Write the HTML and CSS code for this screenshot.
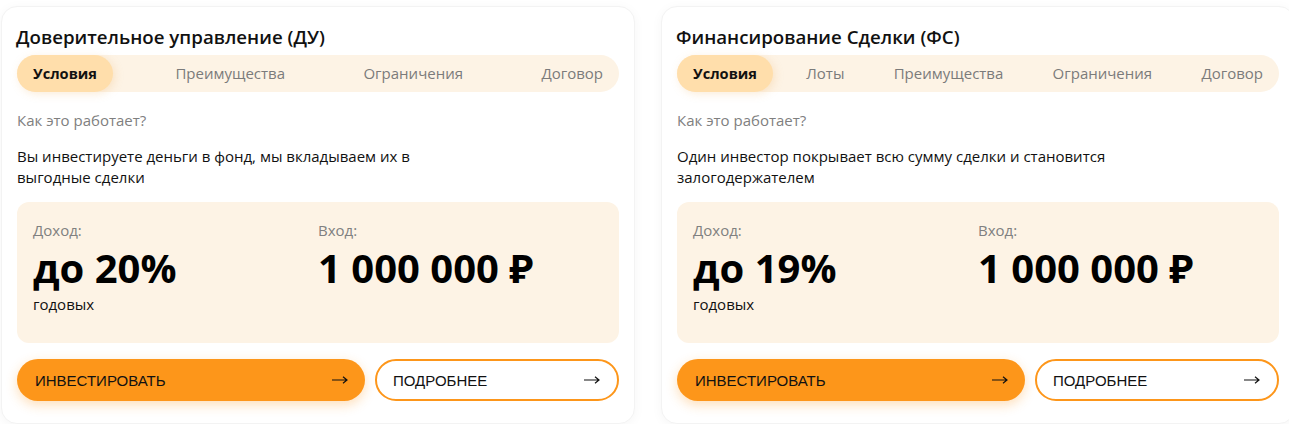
FILE: index.html
```html
<!DOCTYPE html>
<html lang="ru">
<head>
<meta charset="utf-8">
<title>Продукты</title>
<link rel="stylesheet" href="styles.css">
</head>
<body>
<div class="row">
  <section class="card">
    <h2 class="title">Доверительное управление (ДУ)</h2>
    <nav class="tabs">
      <span class="tab active">Условия</span>
      <span class="tab">Преимущества</span>
      <span class="tab">Ограничения</span>
      <span class="tab">Договор</span>
    </nav>
    <p class="hint">Как это работает?</p>
    <p class="desc">Вы инвестируете деньги в фонд, мы вкладываем их в выгодные сделки</p>
    <div class="info">
      <div class="col">
        <div class="label">Доход:</div>
        <div class="big">до 20%</div>
        <div class="sub">годовых</div>
      </div>
      <div class="col">
        <div class="label">Вход:</div>
        <div class="big">1 000 000 ₽</div>
      </div>
    </div>
    <div class="actions">
      <a class="btn primary">ИНВЕСТИРОВАТЬ<svg class="arrow" viewBox="0 0 16 10" width="16" height="10"><path d="M0 5H15M11 1.8L15 5L11 8.2" fill="none" stroke="#111" stroke-width="1.2"/></svg></a>
      <a class="btn outline">ПОДРОБНЕЕ<svg class="arrow" viewBox="0 0 16 10" width="16" height="10"><path d="M0 5H15M11 1.8L15 5L11 8.2" fill="none" stroke="#111" stroke-width="1.2"/></svg></a>
    </div>
  </section>
  <section class="card">
    <h2 class="title">Финансирование Сделки (ФС)</h2>
    <nav class="tabs">
      <span class="tab active">Условия</span>
      <span class="tab">Лоты</span>
      <span class="tab">Преимущества</span>
      <span class="tab">Ограничения</span>
      <span class="tab">Договор</span>
    </nav>
    <p class="hint">Как это работает?</p>
    <p class="desc">Один инвестор покрывает всю сумму сделки и становится залогодержателем</p>
    <div class="info">
      <div class="col">
        <div class="label">Доход:</div>
        <div class="big">до 19%</div>
        <div class="sub">годовых</div>
      </div>
      <div class="col">
        <div class="label">Вход:</div>
        <div class="big">1 000 000 ₽</div>
      </div>
    </div>
    <div class="actions">
      <a class="btn primary">ИНВЕСТИРОВАТЬ<svg class="arrow" viewBox="0 0 16 10" width="16" height="10"><path d="M0 5H15M11 1.8L15 5L11 8.2" fill="none" stroke="#111" stroke-width="1.2"/></svg></a>
      <a class="btn outline">ПОДРОБНЕЕ<svg class="arrow" viewBox="0 0 16 10" width="16" height="10"><path d="M0 5H15M11 1.8L15 5L11 8.2" fill="none" stroke="#111" stroke-width="1.2"/></svg></a>
    </div>
  </section>
</div>
</body>
</html>
```
FILE: styles.css
```css
* { box-sizing: border-box; }
html, body { margin: 0; padding: 0; background: #ffffff; overflow: hidden; }
body {
  font-family: "Open Sans", "Noto Sans", sans-serif;
  color: #111;
  width: 1289px;
  height: 426px;
}
.row {
  display: flex;
  gap: 26px;
  padding: 6px 0 0 1px;
  width: 1289px;
  overflow: hidden;
}
.card {
  flex: 0 0 634px;
  background: #fff;
  border-radius: 16px;
  border: 1px solid #f3f3f3;
  box-shadow: 0 2px 12px rgba(0,0,0,0.04);
  padding: 18px 15px 22px 15px;
}
.title {
  margin: 0 0 6px -1px;
  font-size: 18.7px;
  line-height: 24px;
  font-weight: 600;
  color: #111;
}
.tabs {
  display: flex;
  justify-content: space-between;
  align-items: center;
  background: #fdf3e5;
  border-radius: 19px;
  height: 37px;
}
.tab {
  padding: 0 16px;
  height: 37px;
  line-height: 37px;
  font-size: 15px;
  color: #7b7b7b;
  border-radius: 19px;
  white-space: nowrap;
}
.tab.active {
  background: #ffdeab;
  color: #111;
  font-weight: 700;
  font-size: 14.6px;
  box-shadow: 2px 2px 8px rgba(240, 180, 100, 0.25);
}
.hint {
  margin: 18px 0 0 0;
  font-size: 15px;
  line-height: 20px;
  color: #808080;
}
.desc {
  margin: 16px 0 0 0;
  max-width: 460px;
  font-size: 15px;
  line-height: 21px;
  color: #111;
}
.info {
  margin: 14px 0 0 0;
  background: #fdf3e5;
  border-radius: 12px;
  padding: 18px 16px 29px 16px;
  display: grid;
  grid-template-columns: 1fr 1fr;
}
.label {
  font-size: 15px;
  line-height: 20px;
  color: #808080;
}
.big {
  margin-top: 4px;
  font-size: 40px;
  line-height: 48px;
  font-weight: 700;
  color: #000;
  white-space: nowrap;
}
.sub {
  margin-top: 2px;
  font-size: 15px;
  line-height: 20px;
  color: #111;
}
.actions {
  margin: 16px 0 0 0;
  display: grid;
  grid-template-columns: 348fr 244fr;
  gap: 10px;
}
.btn {
  display: flex;
  align-items: center;
  justify-content: space-between;
  height: 42px;
  border-radius: 21px;
  padding: 0 17px 0 18px;
  font-family: "Liberation Sans", Arial, sans-serif;
  font-size: 15px;
  color: #111;
}
.btn.primary {
  background: #fd961a;
  box-shadow: 0 4px 12px rgba(253, 150, 26, 0.3);
}
.btn.outline {
  background: #fff;
  border: 2px solid #fd961a;
  padding: 0 17px 0 16px;
}
.arrow {
  display: block;
  flex: none;
}
```
